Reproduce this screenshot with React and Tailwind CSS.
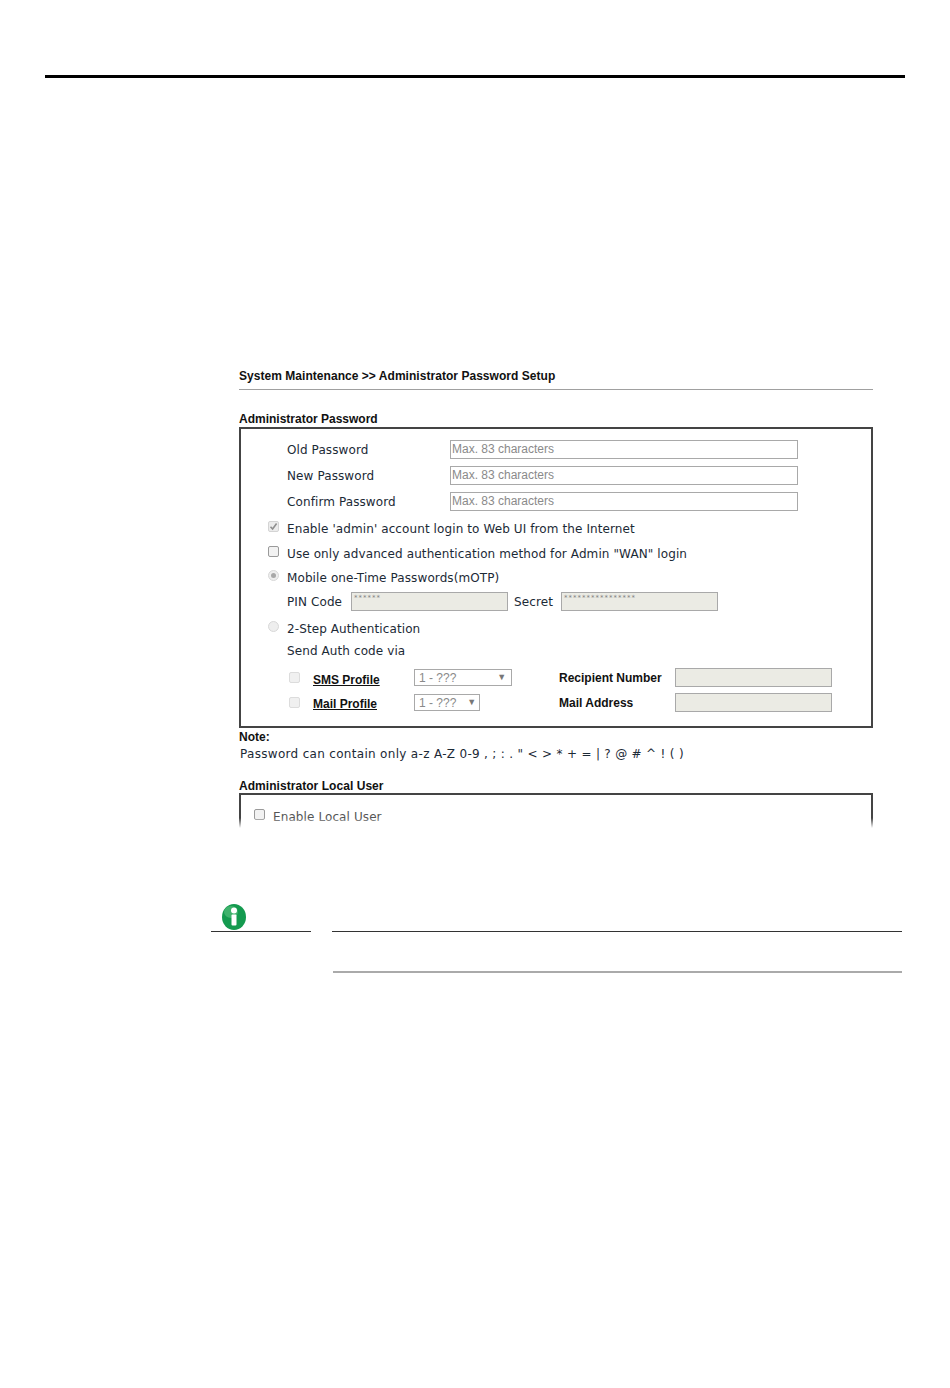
import React from "react";

const bodyFont = "font-['DejaVu_Sans',sans-serif] text-[12px] tracking-[0.1px] text-[#1c2a36]";
const boldFont = "font-['Liberation_Sans',sans-serif] text-[12px] font-bold text-[#111]";

const PasswordRow = ({ label, className = "" }) => (
  <div className={`flex items-center h-[19px] pl-[46px] ${className}`}>
    <span className={`w-[163px] ${bodyFont}`}>{label}</span>
    <div className="w-[348px] h-[19px] border border-[#a9a9a9] bg-white flex items-center pl-px pb-[2px] font-['Liberation_Sans',sans-serif] text-[12px] text-[#8a8a8a]">
      Max. 83 characters
    </div>
  </div>
);

const Check = ({ checked, disabled }) => (
  <div
    className={`w-[11px] h-[11px] rounded-[2px] border flex items-center justify-center ${
      disabled ? "border-[#d4d4d4] bg-[#ececec]" : "border-[#9a9a9a] bg-[#f2f2f2]"
    }`}
  >
    {checked && (
      <svg width="9" height="9" viewBox="0 0 9 9">
        <path d="M1.5 4.8 L3.6 7 L7.6 1.6" fill="none" stroke="#8f8f8f" strokeWidth="1.6" />
      </svg>
    )}
  </div>
);

const Radio = ({ checked }) => (
  <div className="w-[11px] h-[11px] rounded-full border border-[#d8d8d8] bg-[#eeeeee] flex items-center justify-center">
    {checked && <div className="w-[5px] h-[5px] rounded-full bg-[#a8a8a8]" />}
  </div>
);

const OptionRow = ({ control, children, className = "" }) => (
  <div className={`flex items-center h-[20px] pl-[27px] pb-[2px] ${className}`}>
    <div className="w-[19px] mb-[5px]">{control}</div>
    <span className={bodyFont}>{children}</span>
  </div>
);

const DisabledInput = ({ width, text }) => (
  <div
    className={`${width} h-[19px] border border-[#a9a9a9] bg-[#ebebe4] pl-[2px] font-['DejaVu_Sans',sans-serif] text-[7px] tracking-[1px] leading-[11px] text-[#808080]`}
  >
    {text}
  </div>
);

const ProfileRow = ({ label, linkPad, selectWidth, arrowGap, right, className = "" }) => (
  <div className={`flex items-center h-[19px] pl-[48px] ${className}`}>
    <div className="w-[24px]">
      <div className="w-[11px] h-[11px] rounded-[2px] border border-[#dcdcdc] bg-[#f0f0f0]" />
    </div>
    <div className={`w-[101px] ${linkPad}`}>
      <a className={`underline ${boldFont}`}>{label}</a>
    </div>
    <div
      className={`${selectWidth} h-[17px] border border-[#a9a9a9] bg-white flex items-center pl-[4px] font-['Liberation_Sans',sans-serif] text-[12px] text-[#8a8a8a]`}
    >
      <span>1 - ???</span>
      <span className={`${arrowGap} text-[9px] text-[#777]`}>▼</span>
    </div>
    <span className={`absolute left-[318px] ${boldFont}`}>{right}</span>
    <div className="absolute left-[434px] w-[157px] h-[19px] border border-[#a9a9a9] bg-[#ebebe4]" />
  </div>
);

export default function App() {
  return (
    <div className="w-[950px] min-h-[1388px] bg-white pt-[75px]">
      <div className="ml-[45px] w-[860px] h-[3px] bg-black" />

      <div className="ml-[239px] w-[634px] mt-[290px]">
        <div className={`h-[16px] leading-[16px] tracking-[0.04px] ${boldFont}`}>
          System Maintenance &gt;&gt; Administrator Password Setup
        </div>
        <div className="h-px bg-[#a0a0a0] mt-[5px]" />

        <div className={`mt-[20px] h-[16px] leading-[18px] ${boldFont}`}>Administrator Password</div>
        <div className="relative border-2 border-[#444] pt-[11px] pb-[14px] mt-[1px] h-[301px]">
          <PasswordRow label="Old Password" />
          <PasswordRow label="New Password" className="mt-[7px]" />
          <PasswordRow label="Confirm Password" className="mt-[7px]" />

          <OptionRow control={<Check checked disabled />} className="mt-[9px]">
            Enable 'admin' account login to Web UI from the Internet
          </OptionRow>
          <OptionRow control={<Check />} className="mt-[5px]">
            Use only advanced authentication method for Admin "WAN" login
          </OptionRow>
          <OptionRow control={<Radio checked />} className="mt-[4px]">
            Mobile one-Time Passwords(mOTP)
          </OptionRow>

          <div className="flex items-center h-[19px] pl-[46px] mt-[3px]">
            <span className={`w-[64px] ${bodyFont}`}>PIN Code</span>
            <DisabledInput width="w-[157px]" text="******" />
            <span className={`ml-[6px] w-[47px] ${bodyFont}`}>Secret</span>
            <DisabledInput width="w-[157px]" text="****************" />
          </div>

          <OptionRow control={<Radio />} className="mt-[9px]">
            2-Step Authentication
          </OptionRow>
          <div className={`flex items-center h-[20px] pl-[46px] pb-[2px] mt-[2px] ${bodyFont}`}>Send Auth code via</div>

          <ProfileRow
            label="SMS Profile"
            linkPad="pt-px"
            selectWidth="w-[98px]"
            arrowGap="ml-[41px]"
            right="Recipient Number"
            className="mt-[6px]"
          />
          <ProfileRow
            label="Mail Profile"
            linkPad="pb-px"
            selectWidth="w-[66px]"
            arrowGap="ml-[11px]"
            right="Mail Address"
            className="mt-[6px]"
          />
        </div>

        <div className={`mt-px h-[14px] leading-[16px] ${boldFont}`}>Note:</div>
        <div className="mt-[4px] h-[14px] leading-[14px] pl-px font-['DejaVu_Sans',sans-serif] text-[12px] tracking-[0.31px] text-[#1c2a36]">
          Password can contain only a-z A-Z 0-9 , ; : . " &lt; &gt; * + = | ? @ # ^ ! ( )
        </div>

        <div className={`mt-[16px] h-[16px] leading-[18px] tracking-[0.05px] ${boldFont}`}>Administrator Local User</div>
        <div className="relative h-[35px] border-t-2 border-x-2 border-[#444] pl-[13px] pt-[14px]">
          <div className="flex items-center h-[16px]">
            <div className="w-[19px] mb-[5px]">
              <Check />
            </div>
            <span className={`${bodyFont} text-[#555]`}>Enable Local User</span>
          </div>
          <div className="absolute left-[-2px] right-[-2px] bottom-0 h-[10px] bg-gradient-to-b from-transparent to-white" />
        </div>
      </div>

      <div className="ml-[211px] mt-[76px] flex gap-[21px]">
        <div className="w-[100px]">
          <svg className="ml-[10px] block" width="26" height="27" viewBox="0 0 26 27">
            <ellipse cx="13" cy="13" rx="12" ry="13" fill="#149a4f" />
            <ellipse cx="10" cy="8" rx="7" ry="6" fill="#3fb26c" />
            <circle cx="13" cy="6.5" r="3" fill="#ffffff" />
            <rect x="10.5" y="10.5" width="5" height="11" rx="1" fill="#ffffff" />
          </svg>
          <div className="h-px bg-[#333]" />
        </div>
        <div className="w-[570px] pt-[27px]">
          <div className="h-px bg-[#333]" />
          <div className="h-[2px] bg-[#aaa] mt-[39px] ml-px" />
        </div>
      </div>
    </div>
  );
}
